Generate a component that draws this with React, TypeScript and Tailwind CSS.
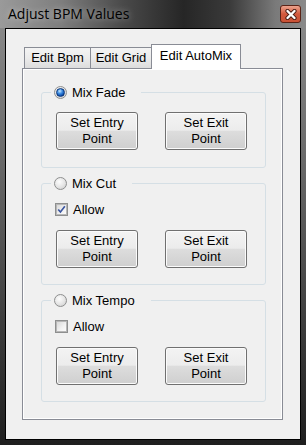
import type { ReactNode } from 'react'

function Radio({ checked = false }: { checked?: boolean }) {
  return (
    <span className="flex h-[13px] w-[13px] shrink-0 items-center justify-center rounded-full border border-[#8e8f8f] bg-[radial-gradient(circle_at_40%_35%,#fdfdfd,#e4e4e4_55%,#c9c9c9)]">
      {checked && (
        <span className="h-[9px] w-[9px] rounded-full border border-[#0a3578] bg-[radial-gradient(circle_at_40%_30%,#c8e8ff,#3b8ae0_40%,#0c4aa8_75%,#072f70)]" />
      )}
    </span>
  )
}

function Checkbox({ checked = false }: { checked?: boolean }) {
  return (
    <span className="flex h-[13px] w-[13px] shrink-0 items-center justify-center border border-[#8e8f8f] bg-white">
      <span className="flex h-[11px] w-[11px] items-center justify-center border border-[#b7b7b7] bg-[linear-gradient(135deg,#d9d9d9,#f2f2f2_60%,#fbfbfb)]">
        {checked && (
          <svg width="11" height="11" viewBox="0 0 11 11">
            <path d="M1.5 5.5 L4.2 8.6 L9.6 1.4" fill="none" stroke="#3a55a0" strokeWidth="2" />
          </svg>
        )}
      </span>
    </span>
  )
}

function PushButton({ top, bottom }: { top: string; bottom: string }) {
  return (
    <div className="flex h-[38px] w-[82px] flex-col items-center justify-center rounded-[3px] border border-[#707070] bg-[linear-gradient(to_bottom,#f3f3f3_0%,#ececec_48%,#dddddd_50%,#cfcfcf_100%)] text-[13px] leading-[16px] shadow-[inset_0_0_0_1px_#fbfbfb]">
      <span>{top}</span>
      <span>{bottom}</span>
    </div>
  )
}

function Group({ label, checked, children, className = '' }: { label: string; checked?: boolean; children: ReactNode; className?: string }) {
  return (
    <div className={`relative w-[225px] rounded-[3px] border border-[#d5dfe5] ${className}`}>
      <div className="absolute left-[9px] top-[-9px] flex h-[16px] items-center bg-[#f0f0f0] pl-[3px] pr-[16px] text-[13px]">
        <Radio checked={checked} />
        <span className="ml-[5px] leading-none">{label}</span>
      </div>
      {children}
    </div>
  )
}

function Buttons({ className = '' }: { className?: string }) {
  return (
    <div className={`flex gap-[27px] pl-[14px] ${className}`}>
      <PushButton top="Set Entry" bottom="Point" />
      <PushButton top="Set Exit" bottom="Point" />
    </div>
  )
}

function AllowRow({ checked }: { checked?: boolean }) {
  return (
    <div className="mt-[17px] flex h-[16px] items-center pl-[13px] text-[13px]">
      <Checkbox checked={checked} />
      <span className="ml-[5px] leading-none">Allow</span>
    </div>
  )
}

export default function App() {
  return (
    <div className="flex h-[445px] w-[306px] flex-col bg-[linear-gradient(to_bottom,#8e8e8e,#6a6a6a_35%,#3a3a3a_75%,#1e1e1e)] font-['Liberation_Sans',Arial,sans-serif] text-black">
      <div className="flex h-[28px] shrink-0 items-start justify-between bg-[linear-gradient(90deg,#9a9a9a,#7e7e7e_20%,#4a4a4a_40%,#262626_60%,#3a3a3a_75%,#7a7a7a_90%,#8a8a8a)]">
        <span className="pl-[8px] pt-[4px] font-['Open_Sans',sans-serif] text-[14px] leading-[20px] [text-shadow:0_0_6px_rgba(255,255,255,0.5)]">
          Adjust BPM Values
        </span>
        <div className="mr-[5px] mt-[5px] flex h-[18px] w-[21px] items-center justify-center rounded-[3px] border border-[#5a2418] bg-[#d0573b] bg-linear-to-b from-[#eba38e] via-[#d3583c] to-[#c85236]">
          <svg width="12" height="11" viewBox="0 0 12 11">
            <path d="M2.5 2 L9.5 9 M9.5 2 L2.5 9" stroke="#4a1c14" strokeWidth="4.2" strokeLinecap="round" />
            <path d="M2.5 2 L9.5 9 M9.5 2 L2.5 9" stroke="#ffffff" strokeWidth="2.4" strokeLinecap="round" />
          </svg>
        </div>
      </div>

      <div className="mx-[5px] h-[412px] shrink-0 border border-black bg-[#f0f0f0] pl-[16px] pt-[15px]">
        <div className="w-[261px]">
          <div className="flex h-[24px] items-end pl-[2px] text-[13px]">
            <div className="flex h-[21px] w-[67px] items-center justify-center border border-b-0 border-[#898c95] bg-[linear-gradient(to_bottom,#f4f4f4,#ebebeb_50%,#dcdcdc)]">
              Edit Bpm
            </div>
            <div className="-ml-px flex h-[21px] w-[62px] items-center justify-center border border-b-0 border-[#898c95] bg-[linear-gradient(to_bottom,#f4f4f4,#ebebeb_50%,#dcdcdc)]">
              Edit Grid
            </div>
            <div className="relative z-10 -mb-px -ml-px flex h-[25px] w-[90px] items-center justify-center border border-b-0 border-[#898c95] bg-white pb-[2px]">
              Edit AutoMix
            </div>
          </div>
          <div className="h-[352px] border border-[#898c95] bg-[#f0f0f0] pl-[18px] pt-[23px] shadow-[inset_1px_1px_0_#ffffff,inset_-1px_-1px_0_#ffffff]">
            <Group label="Mix Fade" checked>
              <Buttons className="pb-[17px] pt-[19px]" />
            </Group>
            <Group label="Mix Cut" className="mt-[15px]">
              <AllowRow checked />
              <Buttons className="mt-[13px] pb-[16px]" />
            </Group>
            <Group label="Mix Tempo" className="mt-[15px]">
              <AllowRow />
              <Buttons className="mt-[13px] pb-[16px]" />
            </Group>
          </div>
        </div>
      </div>
    </div>
  )
}
